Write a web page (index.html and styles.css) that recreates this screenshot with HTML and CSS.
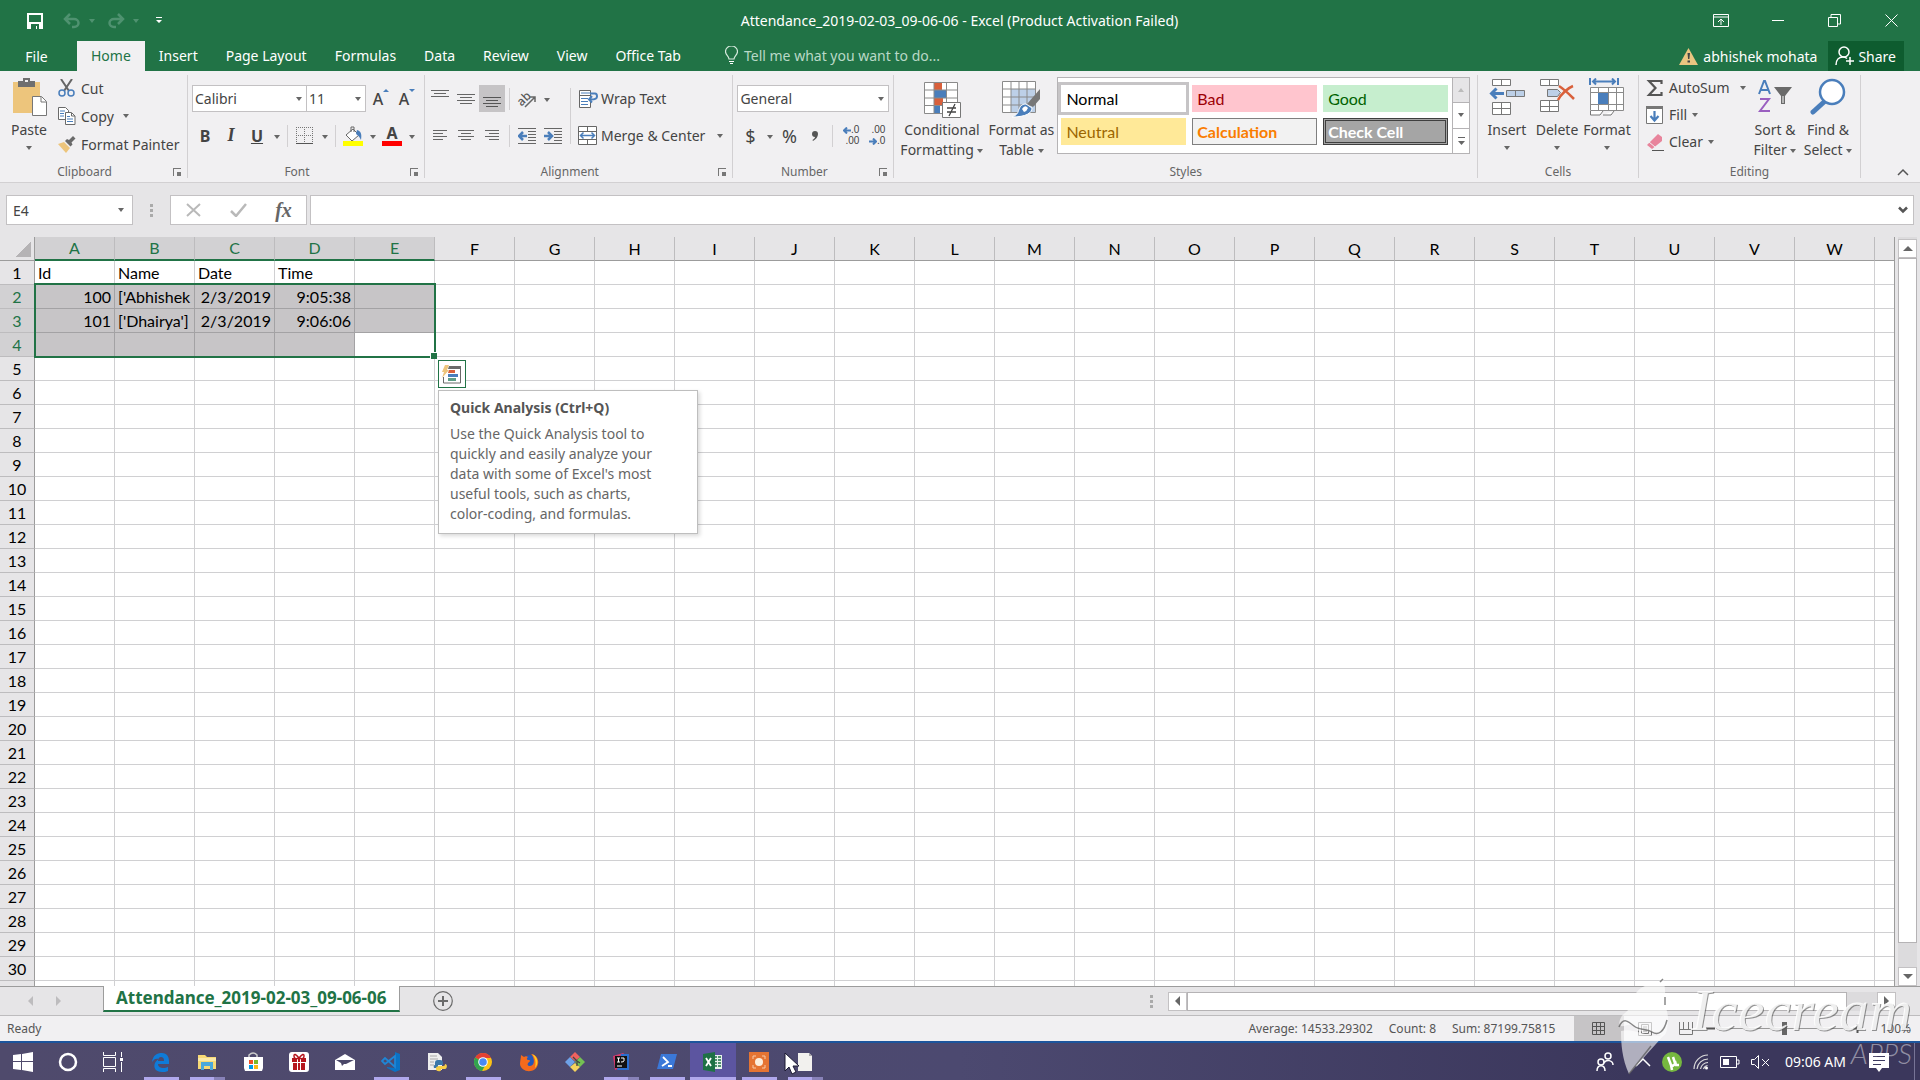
FILE: index.html
```html
<!DOCTYPE html>
<html lang="en">

<head>
    <meta charset="UTF-8">
    <meta name="viewport" content="width=device-width, initial-scale=1.0">
    <title>Attendance_2019-02-03_09-06-06 - Excel</title>
    <link rel="stylesheet" href="styles.css">
</head>

<body>
    <header class="top">
        <div class="titlebar">
            <div class="quick">
                <button class="save" aria-label="Save">
                    <svg width="16" height="16" viewBox="0 0 16 16"><path d="M1 1h14v14H1z" fill="none" stroke="#fff" stroke-width="2"/><path d="M1 9h14v6H1z" fill="#fff"/><path d="M4 11h8v5h-2v-3H9v3H4z" fill="#217346"/></svg>
                </button>
                <button class="dim" aria-label="Undo">
                    <svg width="18" height="16" viewBox="0 0 18 16"><path d="M2 6h9a4.500 4 0 0 1 0 8H9M7 1L2 6l5 5" fill="none" stroke="currentColor" stroke-width="2.500"/></svg>
                    <i class="caret"></i>
                </button>
                <button class="dim" aria-label="Redo">
                    <svg width="18" height="16" viewBox="0 0 18 16"><path d="M16 6H7a4.500 4 0 0 0 0 8h2M11 1l5 5-5 5" fill="none" stroke="currentColor" stroke-width="2.500"/></svg>
                    <i class="caret"></i>
                </button>
                <button class="more" aria-label="Customize">
                    <svg width="6" height="7" viewBox="0 0 6 7"><path d="M0 0h6v1H0zM0 3h6L3 6z" fill="#fff"/></svg>
                </button>
            </div>
            <h1>Attendance_2019-02-03_09-06-06 - Excel (Product Activation Failed)</h1>
            <div class="win-btns">
                <button aria-label="Ribbon options"><svg width="16" height="14" viewBox="0 0 16 14"><path d="M.5.5h15v12H.5zM.5 3h15M8 11V5M5 8l3-3 3 3" fill="none" stroke="#fff"/></svg></button>
                <button aria-label="Minimize"><svg width="12" height="12" viewBox="0 0 12 12"><path d="M0 5.500h12" stroke="#fff"/></svg></button>
                <button aria-label="Restore"><svg width="13" height="13" viewBox="0 0 13 13"><path d="M.5 3.500h9v9h-9zM3 3V.5h9.500V10H10" fill="none" stroke="#fff"/></svg></button>
                <button aria-label="Close"><svg width="13" height="13" viewBox="0 0 13 13"><path d="M.5.5l12 12M12.500.5l-12 12" stroke="#fff"/></svg></button>
            </div>
        </div>
        <nav class="tabs">
            <button class="file">File</button>
            <button class="active">Home</button>
            <button>Insert</button>
            <button>Page Layout</button>
            <button>Formulas</button>
            <button>Data</button>
            <button>Review</button>
            <button>View</button>
            <button>Office Tab</button>
            <button class="tell">
                <svg width="13" height="19" viewBox="0 0 13 19"><path d="M4 13c0-3-3.500-4-3.500-7.500a6 5.500 0 0 1 12 0C12.500 9 9 10 9 13zM4 15.500h5" fill="none" stroke="#d8ebdf" stroke-width="1.200"/><path d="M4 15h5v1H4zM5 17h3v1H5z" fill="#fff"/></svg>
                Tell me what you want to do...
            </button>
            <div class="account">
                <svg width="19" height="17" viewBox="0 0 19 17"><path d="M9.500 0L19 17H0z" fill="#ebc581"/><path d="M8.500 5h2.500l-.6 6H9.100zM8.500 12.500h2.500v2H8.500z" fill="#444"/></svg>
                <span>abhishek mohata</span>
            </div>
            <button class="share">
                <svg width="19" height="20" viewBox="0 0 19 20"><circle cx="9" cy="6" r="5" fill="none" stroke="#fff" stroke-width="1.500"/><path d="M1 19c0-5 3-8 7-8 2 0 3 .6 4 1.500M15 11v8M11 15h8" fill="none" stroke="#fff" stroke-width="1.500"/></svg>
                Share
            </button>
        </nav>
    </header>

    <section class="ribbon">
        <div class="group">
            <div class="group-body clipboard">
                <button class="big">
                    <svg width="36" height="40" viewBox="0 0 36 40"><path d="M2 4h27v31H2z" fill="#edc57c"/><path d="M7 3h5V0h7v3h5v6H7z" fill="#6f6f6f"/><path d="M14 2h3v2h-3z" fill="#eee"/><path d="M21.500 18.500h9l5 5v14h-14z" fill="#fff" stroke="#777"/><path d="M30 19v5h5" fill="none" stroke="#777"/></svg>
                    <span>Paste</span><i class="caret"></i>
                </button>
                <div class="small-col">
                    <button>
                        <svg width="18" height="18" viewBox="0 0 18 18"><path d="M3 0l8 12M14 0L6 12" stroke="#666" stroke-width="2"/><circle cx="4" cy="14" r="3" fill="none" stroke="#4a7ebb" stroke-width="1.500"/><circle cx="13" cy="14" r="3" fill="none" stroke="#4a7ebb" stroke-width="1.500"/></svg>
                        Cut
                    </button>
                    <button>
                        <svg width="18" height="18" viewBox="0 0 18 18"><path d="M.5.5h7l3 3v9H.5z" fill="#fff" stroke="#6a6a6a"/><path d="M2 4h5M2 6.500h4M2 9h4" stroke="#4a7ebb"/><path d="M7.500 5.500h6l3.500 3.500v8.500H7.500z" fill="#fff" stroke="#6a6a6a"/><path d="M13.500 6v3H17" fill="none" stroke="#6a6a6a"/><path d="M9 9.500h3M9 12h6M9 14.500h6" stroke="#4a7ebb"/></svg>
                        Copy <i class="caret"></i>
                    </button>
                    <button>
                        <svg width="18" height="18" viewBox="0 0 18 18"><path d="M0 9l6-2 6 6-4 5z" fill="#edc57c"/><path d="M7 6l2-2 2 1 4-4 2.500 2.500-4 4 1 2-2 2z" fill="#6a6a6a"/></svg>
                        Format Painter
                    </button>
                </div>
            </div>
            <div class="group-label"><span>Clipboard</span><button class="launch" aria-label="Clipboard options"></button></div>
        </div>

        <div class="group">
            <div class="group-body rows">
                <div class="row">
                    <label class="combo font-name"><select aria-label="Font"><option>Calibri</option></select></label>
                    <label class="combo font-size"><select aria-label="Font size"><option>11</option></select></label>
                    <button class="tool grow" aria-label="Increase font">A<svg width="6" height="4" viewBox="0 0 6 4"><path d="M0 3l3-3 3 3z" fill="#4a7ebb"/></svg></button>
                    <button class="tool grow" aria-label="Decrease font">A<svg width="6" height="4" viewBox="0 0 6 4"><path d="M0 0h6L3 3z" fill="#4a7ebb"/></svg></button>
                </div>
                <div class="row">
                    <button class="tool bold">B</button>
                    <button class="tool italic">I</button>
                    <button class="tool underline">U</button>
                    <button class="drop" aria-label="Underline styles"><i class="caret"></i></button>
                    <span class="sep"></span>
                    <button class="tool" aria-label="Borders"><svg width="18" height="18" viewBox="0 0 18 18"><path d="M.5 0v16M8.500 0v16M16.500 0v16M0 .5h17M0 8.500h17" stroke="#777" stroke-dasharray="1 1"/><path d="M0 16.500h17" stroke="#555"/></svg></button>
                    <button class="drop" aria-label="Border styles"><i class="caret"></i></button>
                    <span class="sep"></span>
                    <button class="tool" aria-label="Fill color"><svg width="20" height="20" viewBox="0 0 20 20"><path d="M3 9l7-6 6 6-7 6z" fill="#fff" stroke="#666"/><path d="M8 6V1h3v5" fill="none" stroke="#666"/><path d="M14 4c4 1 5 4 4 10-1-2-2-4-5-6z" fill="#4a7ebb"/><path d="M0 15h20v5H0z" fill="#ff0"/></svg></button>
                    <button class="drop" aria-label="Fill colors"><i class="caret"></i></button>
                    <button class="tool font-color" aria-label="Font color">A</button>
                    <button class="drop" aria-label="Font colors"><i class="caret"></i></button>
                </div>
            </div>
            <div class="group-label"><span>Font</span><button class="launch" aria-label="Font options"></button></div>
        </div>

        <div class="group">
            <div class="group-body align">
                <div class="rows">
                    <div class="row">
                        <button class="tool" aria-label="Top align"><svg width="18" height="18" viewBox="0 0 18 18"><path d="M0 .5h18M3 3.500h12M0 6.500h18" stroke="#666"/></svg></button>
                        <button class="tool" aria-label="Middle align"><svg width="18" height="18" viewBox="0 0 18 18"><path d="M0 4.500h18M3 7.500h12M0 10.500h18M3 13.500h12" stroke="#666"/></svg></button>
                        <button class="tool pressed" aria-label="Bottom align"><svg width="18" height="18" viewBox="0 0 18 18"><path d="M0 7.500h18M3 10.500h12M0 13.500h18M3 16.500h12" stroke="#555"/></svg></button>
                        <span class="sep"></span>
                        <button class="tool" aria-label="Orientation"><svg class="slant" width="20" height="20" viewBox="0 0 20 20"><text x="1" y="15" transform="rotate(-45 6 12)">ab</text><path d="M8 18L18 8M13 8h5v5" fill="none" stroke="#666" stroke-width="1.500"/></svg></button>
                        <button class="drop" aria-label="Orientation menu"><i class="caret"></i></button>
                    </div>
                    <div class="row">
                        <button class="tool" aria-label="Align left"><svg width="14" height="14" viewBox="0 0 14 14"><path d="M0 1.500h14M0 4.500h10M0 7.500h14M0 10.500h10" stroke="#666"/></svg></button>
                        <button class="tool" aria-label="Center"><svg width="16" height="14" viewBox="0 0 16 14"><path d="M0 1.500h16M3 4.500h10M0 7.500h16M3 10.500h10" stroke="#666"/></svg></button>
                        <button class="tool" aria-label="Align right"><svg width="14" height="14" viewBox="0 0 14 14"><path d="M0 1.500h14M4 4.500h10M0 7.500h14M4 10.500h10" stroke="#666"/></svg></button>
                        <span class="sep"></span>
                        <button class="tool" aria-label="Decrease indent"><svg width="18" height="18" viewBox="0 0 18 18"><path d="M0 1.500h18M10 4.500h8M10 7.500h8M10 10.500h8M10 13.500h8M0 16.500h18" stroke="#666"/><path d="M9 9H2M5 5L1 9l4 4" fill="none" stroke="#4a7ebb" stroke-width="2.500"/></svg></button>
                        <button class="tool" aria-label="Increase indent"><svg width="18" height="18" viewBox="0 0 18 18"><path d="M0 1.500h18M10 4.500h8M10 7.500h8M10 10.500h8M10 13.500h8M0 16.500h18" stroke="#666"/><path d="M0 9h7M4 5l4 4-4 4" fill="none" stroke="#4a7ebb" stroke-width="2.500"/></svg></button>
                    </div>
                </div>
                <span class="sep tall"></span>
                <div class="rows">
                    <button class="row text-btn">
                        <svg width="20" height="18" viewBox="0 0 20 18"><path d="M1.500.5h11v17h-11zM1.500 5.500h11" fill="#fff" stroke="#666"/><path d="M3 3h9M3 8.500h7M3 11.500h7M3 14.500h7" stroke="#4a7ebb"/><path d="M12 3.500h5q2 0 2 3t-6 3M14 6l-3 3.500 3 3" fill="none" stroke="#4a7ebb" stroke-width="2"/></svg>
                        Wrap Text
                    </button>
                    <button class="row text-btn">
                        <svg width="20" height="20" viewBox="0 0 20 20"><path d="M.5.500h18v18H.5zM.5 5.500h18M.5 13.500h18M9.500.5v5M9.500 13.500v5" fill="#fff" stroke="#666"/><path d="M2.500 9.500h14M5.500 6.500l-3 3 3 3M13.500 6.500l3 3-3 3" fill="none" stroke="#4a7ebb" stroke-width="1.500"/></svg>
                        Merge &amp; Center <i class="caret"></i>
                    </button>
                </div>
            </div>
            <div class="group-label"><span>Alignment</span><button class="launch" aria-label="Alignment options"></button></div>
        </div>

        <div class="group">
            <div class="group-body rows">
                <div class="row">
                    <label class="combo number-format"><select aria-label="Number format"><option>General</option></select></label>
                </div>
                <div class="row">
                    <button class="tool sign">$</button>
                    <button class="drop" aria-label="Currency menu"><i class="caret"></i></button>
                    <button class="tool sign">%</button>
                    <button class="tool" aria-label="Comma style"><svg width="8" height="10" viewBox="0 0 8 10"><path d="M4 0a3 3 0 0 1 3 3c0 3-2 5-5 7l-.5-1C3 8 4 7 4 6a3 3 0 0 1 0-6z" fill="#555"/></svg></button>
                    <span class="sep"></span>
                    <button class="tool decimals"><span><svg width="8" height="7" viewBox="0 0 8 7"><path d="M8 3.500H2M4 .5l-3 3 3 3" fill="none" stroke="#4a7ebb" stroke-width="2"/></svg>.0</span><span>.00</span></button>
                    <button class="tool decimals"><span>.00</span><span><svg width="8" height="7" viewBox="0 0 8 7"><path d="M0 3.500h6M4 .5l3 3-3 3" fill="none" stroke="#4a7ebb" stroke-width="2"/></svg>.0</span></button>
                </div>
            </div>
            <div class="group-label"><span>Number</span><button class="launch" aria-label="Number options"></button></div>
        </div>

        <div class="group styles">
            <div class="group-body">
                <button class="big cond">
                    <svg width="38" height="40" viewBox="0 0 38 40"><path d="M1.500 4.500h33v31h-33z" fill="#fff"/><path d="M11 5h8v7h-8zM11 20h9v7h-9z" fill="#d9603b"/><path d="M11 12h12v8H11zM11 27h6v8h-6z" fill="#4a7ebb"/><path d="M1.500 4.500h33v31h-33zM11 4v31M23.500 4v31M1 12h33M1 20h33M1 27.500h33" fill="none" stroke="#8a8a8a"/><path d="M19.500 24.500h18v15h-18z" fill="#fff" stroke="#777"/><path d="M24 30h9M24 34h9M32 26l-6 12" stroke="#444" stroke-width="1.300"/></svg>
                    <span>Conditional<br>Formatting <i class="caret"></i></span>
                </button>
                <button class="big table">
                    <svg width="38" height="40" viewBox="0 0 38 40"><path d="M.5 3.500h33v31H.5z" fill="#fff"/><path d="M9 11h24v23H9z" fill="#bdd0e8"/><path d="M.5 3.500h33v31H.5zM9 3v31M17 3v31M25 3v31M0 11h33M0 19h33M0 27h33" fill="none" stroke="#8a8a8a"/><path d="M38 11v10l-7 8-6-3z" fill="#777"/><path d="M24 26l6 4c0 5-6 9-20 9 5-2 6-4 7-8 2-4 4-5 7-5z" fill="#4a7ebb" stroke="#fff"/><path d="M20 31q3-5 6-1-1 3-4 4z" fill="#fff"/></svg>
                    <span>Format as<br>Table <i class="caret"></i></span>
                </button>
                <div class="gallery">
                    <div class="tiles">
                        <button class="normal">Normal</button>
                        <button class="bad">Bad</button>
                        <button class="good">Good</button>
                        <button class="neutral">Neutral</button>
                        <button class="calc">Calculation</button>
                        <button class="check">Check Cell</button>
                    </div>
                    <div class="gallery-nav">
                        <button class="off" aria-label="Previous styles"><i class="caret up"></i></button>
                        <button aria-label="Next styles"><i class="caret"></i></button>
                        <button aria-label="All styles"><svg width="7" height="8" viewBox="0 0 7 8"><path d="M0 0h7v1H0zM0 4h7L3.500 8z" fill="#666"/></svg></button>
                    </div>
                </div>
            </div>
            <div class="group-label"><span>Styles</span></div>
        </div>

        <div class="group cells">
            <div class="group-body">
                <button class="big">
                    <svg width="36" height="40" viewBox="0 0 36 40"><path d="M3.500 1.500h18v6h-18zM12.500 1.500v6M3.500 24.500h18v12h-18zM12.500 24.500v12M3.500 30.500h18" fill="#fff" stroke="#777"/><path d="M17.500 12.500h18v6h-18zM26.500 12.500v6" fill="#bdd0e8" stroke="#777"/><path d="M15 15.500H3M7.500 10.500l-5 5 5 5" fill="none" stroke="#4a7ebb" stroke-width="3"/></svg>
                    <span>Insert</span><i class="caret"></i>
                </button>
                <button class="big">
                    <svg width="36" height="40" viewBox="0 0 36 40"><path d="M1.500 1.500h18v6h-18zM10.500 1.500v6M1.500 22.500h18v11h-18zM10.500 22.500v11M1.500 28.500h18" fill="#fff" stroke="#777"/><path d="M8.500 11.500h10l3 3-3 4h-10z" fill="#bdd0e8" stroke="#777"/><path d="M20 8c5 3 10 8 15 13M34 8c-5 2-12 8-15 14" fill="none" stroke="#d9603b" stroke-width="2.500"/></svg>
                    <span>Delete</span><i class="caret"></i>
                </button>
                <button class="big">
                    <svg width="36" height="40" viewBox="0 0 36 40"><path d="M1.500 9.500h33v23h-33z" fill="#fff"/><path d="M1.500 9.500h33v23h-33zM9.500 9v23M19.500 9v23M27.500 9v23M1 14.500h33M1 26.500h33" fill="none" stroke="#8a8a8a"/><path d="M9 15h10v11H9z" fill="#4a7ebb"/><path d="M1.500 33v4H11l3-4M14 37h8l3-4" fill="#fff" stroke="#777"/><path d="M1 0v7M29 0v7M4 3.500h22M7 .5l-3 3 3 3M23 .5l3 3-3 3" fill="none" stroke="#4a7ebb" stroke-width="2"/></svg>
                    <span>Format</span><i class="caret"></i>
                </button>
            </div>
            <div class="group-label"><span>Cells</span></div>
        </div>

        <div class="group">
            <div class="group-body editing">
                <div class="small-col">
                    <button>
                        <svg width="18" height="18" viewBox="0 0 18 18"><path d="M15.500 5V2H3l6.500 7L3 16h12.500v-3" fill="none" stroke="#555" stroke-width="2.200"/></svg>
                        AutoSum <i class="caret far"></i>
                    </button>
                    <button>
                        <svg width="18" height="18" viewBox="0 0 18 18"><path d="M.5.5h16v17H.5z" fill="#fff" stroke="#777"/><path d="M0 0h17v3H0z" fill="#777"/><path d="M8.500 5v9M4.500 10l4 4.500 4-4.500" fill="none" stroke="#4a7ebb" stroke-width="2.200"/></svg>
                        Fill <i class="caret"></i>
                    </button>
                    <button>
                        <svg width="18" height="18" viewBox="0 0 18 18"><path d="M1 12L12 1l4 3v4L6 16z" fill="#e8849c"/><path d="M3 9l6 5" stroke="#f1f0f2" stroke-width="1"/><path d="M6 17.500h12" stroke="#555"/></svg>
                        Clear <i class="caret"></i>
                    </button>
                </div>
                <button class="big">
                    <svg width="36" height="40" viewBox="0 0 36 40"><path d="M2 16L7 3h1l5 13M4 12h7" fill="none" stroke="#4a7ebb" stroke-width="2"/><path d="M3 21h9L3 33h10" fill="none" stroke="#9a5fc0" stroke-width="2"/><path d="M17 9h18l-7 9v8h-4v-8z" fill="#6a6a6a"/><path d="M25.500 18h1v7h-1z" fill="#fff"/></svg>
                    <span>Sort &amp;<br>Filter <i class="caret"></i></span>
                </button>
                <button class="big find">
                    <svg width="36" height="40" viewBox="0 0 36 40"><path d="M14 24L3 34" stroke="#4a7ebb" stroke-width="5" stroke-linecap="round"/><circle cx="22" cy="14" r="12" fill="#fff" stroke="#4a7ebb" stroke-width="2.500"/></svg>
                    <span>Find &amp;<br>Select <i class="caret"></i></span>
                </button>
            </div>
            <div class="group-label"><span>Editing</span></div>
        </div>
        <button class="collapse" aria-label="Collapse ribbon"><svg width="12" height="8" viewBox="0 0 12 8"><path d="M1 7l5-5 5 5" fill="none" stroke="#555" stroke-width="1.500"/></svg></button>
    </section>

    <section class="formula-bar">
        <label class="combo name-box"><select aria-label="Name box"><option>E4</option></select></label>
        <span class="dots"></span>
        <div class="fx-btns">
            <button aria-label="Cancel"><svg width="16" height="14" viewBox="0 0 16 14"><path d="M1 1l13 12M14 1L1 13" stroke="#b9b9b9" stroke-width="2"/></svg></button>
            <button aria-label="Enter"><svg width="17" height="14" viewBox="0 0 17 14"><path d="M1 8l5 5L16 1" fill="none" stroke="#b9b9b9" stroke-width="2.500"/></svg></button>
            <button class="fx">fx</button>
        </div>
        <div class="formula">
            <input type="text" aria-label="Formula">
            <button aria-label="Expand formula bar"><svg width="10" height="8" viewBox="0 0 10 8"><path d="M1 1.500l4 4 4-4" fill="none" stroke="#555" stroke-width="2.500"/></svg></button>
        </div>
    </section>

    <main class="sheet">
        <div class="grid">
            <table>
                <thead></thead>
                <tbody></tbody>
            </table>
            <div class="selection"></div>
            <button class="quick-analysis" aria-label="Quick Analysis">
                <svg width="20" height="19" viewBox="0 0 20 19"><path d="M1.500 12v6h17V2" fill="#fff" stroke="#6a6a6a"/><path d="M7 1h12v3H6z" fill="#6a6a6a"/><path d="M7 5h6v3H6z" fill="#d9603b"/><path d="M6 9h10v3H6z" fill="#4a7ebb"/><path d="M6 13h8v3H6z" fill="#5f9e86"/><path d="M3 0h4L5 5h2l-7 8 2-6H0z" fill="#edc57c"/></svg>
            </button>
            <div class="tooltip">
                <h2>Quick Analysis (Ctrl+Q)</h2>
                <p>Use the Quick Analysis tool to<br>quickly and easily analyze your<br>data with some of Excel's most<br>useful tools, such as charts,<br>color-coding, and formulas.</p>
            </div>
        </div>
        <div class="vscroll">
            <button aria-label="Scroll up"><i class="caret up"></i></button>
            <div class="thumb"></div>
            <button aria-label="Scroll down"><i class="caret"></i></button>
        </div>
    </main>

    <section class="sheet-tabs">
        <div class="sheet-nav">
            <button aria-label="Previous sheet"><i class="side left"></i></button>
            <button aria-label="Next sheet"><i class="side right"></i></button>
        </div>
        <button class="sheet-tab">Attendance_2019-02-03_09-06-06</button>
        <button class="add" aria-label="New sheet"><svg width="20" height="20" viewBox="0 0 20 20"><circle cx="10" cy="10" r="9.300" fill="none" stroke="#6a6a6a" stroke-width="1.200"/><path d="M10 5v10M5 10h10" stroke="#6a6a6a" stroke-width="2"/></svg></button>
        <span class="dots"></span>
        <div class="hscroll">
            <button aria-label="Scroll left"><i class="side left"></i></button>
            <div class="thumb"></div>
            <button aria-label="Scroll right"><i class="side right"></i></button>
        </div>
    </section>

    <footer class="status">
        <span class="ready">Ready</span>
        <span>Average: 14533.29302</span>
        <span>Count: 8</span>
        <span>Sum: 87199.75815</span>
        <div class="views">
            <button class="on" aria-label="Normal view"><svg width="14" height="14" viewBox="0 0 14 14"><path d="M.5.5h12v12H.5zM4.500 0v13M8.500 0v13M0 4.500h13M0 8.500h13" fill="none" stroke="#555"/></svg></button>
            <button aria-label="Page layout view"><svg width="14" height="14" viewBox="0 0 14 14"><path d="M.5.5h13v13H.5zM3.500 2.500h7v9h-7zM5 5h4M5 7h4M5 9h4" fill="none" stroke="#777"/></svg></button>
            <button aria-label="Page break view"><svg width="14" height="14" viewBox="0 0 14 14"><path d="M.5 0v12.500h13V0M4.500 0v7.500h5V0M.5 7.500h13" fill="none" stroke="#777"/></svg></button>
        </div>
        <div class="zoom">
            <button aria-label="Zoom out"><svg width="9" height="9" viewBox="0 0 9 9"><path d="M0 4.500h9" stroke="#555" stroke-width="2"/></svg></button>
            <input type="range" min="0" max="200" value="100" aria-label="Zoom">
            <button aria-label="Zoom in"><svg width="9" height="9" viewBox="0 0 9 9"><path d="M0 4.500h9M4.500 0v9" stroke="#555" stroke-width="2"/></svg></button>
            <span>100%</span>
        </div>
    </footer>

    <section class="taskbar">
        <div class="system">
            <button aria-label="Start"><svg width="20" height="20" viewBox="0 0 20 20"><path d="M0 3l8-1v7H0zM9 2l11-2v9H9zM0 10h8v8l-8-1zM9 10h11v10L9 18z" fill="#fff"/></svg></button>
            <button aria-label="Search"><svg width="20" height="20" viewBox="0 0 20 20"><circle cx="10" cy="10" r="8" fill="none" stroke="#fff" stroke-width="2.500"/></svg></button>
            <button aria-label="Task view"><svg width="20" height="20" viewBox="0 0 20 20"><path d="M.5 0v3.500h12V0M.5 5.500h12v9H.5zM.5 20v-3.500h12V20M18.500 0v5M18.500 10v10" fill="none" stroke="#fff"/><path d="M17 6h3v3h-3z" fill="#fff"/></svg></button>
        </div>
        <div class="apps">
            <button class="run" aria-label="Edge"><svg width="20" height="20" viewBox="0 0 20 20"><path d="M1 10C2 3 6 1 11 1c5 0 7 4 7 8v3H7c0 3 3 4 5 4 2 0 4-.6 5-1v4c-2 1-4 1-6 1-6 0-9-4-7-9 1-2 2-3 4-4C5 6 3 7 1 10zm6-1h6c0-3-1-4-3-4S7 7 7 9z" fill="#0f7bd8"/></svg></button>
            <button class="run more" aria-label="File Explorer"><svg width="20" height="20" viewBox="0 0 20 20"><path d="M1 3h7l2 2h9v12H1z" fill="#f7d975"/><path d="M1 6h18v3H1z" fill="#fbe9a6"/><path d="M4 10h12v8h-3v-4H7v4H4z" fill="#4aa8dc"/></svg></button>
            <button aria-label="Store"><svg width="20" height="20" viewBox="0 0 20 20"><path d="M6 5V3q4-4 8 0v2" fill="none" stroke="#ccc" stroke-width="1.500"/><path d="M1 5h19v11l-1 3H2l-1-3z" fill="#fff"/><path d="M6 8h4v4H6z" fill="#f05125"/><path d="M11 8h4v4h-4z" fill="#7db928"/><path d="M6 13h4v4H6z" fill="#0099e5"/><path d="M11 13h4v4h-4z" fill="#fdb813"/></svg></button>
            <button aria-label="Rewards"><svg width="20" height="20" viewBox="0 0 20 20"><rect width="20" height="20" rx="3" fill="#fff"/><path d="M3 6h14v4H3zM4 11h12v7H4z" fill="#b5161e"/><path d="M8.500 6v12M11.500 6v12" stroke="#fff"/><path d="M10 6Q5 0 5 4t5 2q5 2 5-2t-5 2" fill="none" stroke="#b5161e" stroke-width="1.500"/></svg></button>
            <button aria-label="Mail"><svg width="20" height="18" viewBox="0 0 20 18"><path d="M0 7l10-6 10 6v10H0z" fill="#fff"/><path d="M1 7h18l-8 4H9l-2 2-1-3z" fill="#4a4768"/></svg></button>
            <button class="run" aria-label="VS Code"><svg width="20" height="20" viewBox="0 0 20 20"><path d="M14 0l5 2v16l-5 2-8-4v-1l8 1V3z" fill="#0b72c4"/><path d="M14 4L4 12 1 9l3-3 10 9z" fill="none" stroke="#1f86d6" stroke-width="1.800"/></svg></button>
            <button aria-label="Python"><svg width="20" height="20" viewBox="0 0 20 20"><path d="M1 1h10l4 4v13H1z" fill="#eee"/><path d="M3 4h7M3 7h8M3 10h4M3 13h4" stroke="#aaa"/><path d="M8 13c0-4 0-5 4-5s4 1 4 5h-5v3H7q-1-3 1-3z" fill="#3b77a8"/><path d="M18 12c3 0 2 5 0 5h-4c1 3-5 3-5 0 0-3 2-3 5-3 3 0 4 0 4-2z" fill="#f7cf46"/></svg></button>
            <button class="run" aria-label="Chrome"><svg width="20" height="20" viewBox="0 0 20 20"><circle cx="10" cy="10" r="9" fill="#fbc116"/><path d="M10 10L2.200 5.500A9 9 0 0 1 18 6H10z" fill="#e24033"/><path d="M2.200 5.500A9 9 0 0 0 9 19l4-7-3-2z" fill="#31a350"/><circle cx="10" cy="10" r="4.800" fill="#fff"/><circle cx="10" cy="10" r="3.800" fill="#4889f4"/></svg></button>
            <button aria-label="Firefox"><svg width="20" height="20" viewBox="0 0 20 20"><circle cx="11" cy="10" r="7" fill="#2458b8"/><path d="M2 3l3 2c1-1 3-1 4 0-1 1-2 2 0 3 2 0 3 1 1 2-2 2-2 4 1 4 5 0 5-8 1-12 6 1 8 6 7 10-2 10-17 9-18 0 0-3 1-6 1-9z" fill="#f46a1c"/><path d="M13 2c6 2 7 10 3 14 1-5 1-9-3-14z" fill="#fecb22"/></svg></button>
            <button aria-label="Git"><svg width="20" height="20" viewBox="0 0 20 20"><path d="M10 0l5 5-5 4-5-4z" fill="#f0625e"/><path d="M5 5l5 5-5 5-5-5z" fill="#6ea2e8"/><path d="M15 5l5 5-5 5-5-5z" fill="#74c153"/><path d="M10 11l5 4-5 5-5-5z" fill="#f4d35c"/><path d="M8 5l4 4v5M12 9l3 2" fill="none" stroke="#444" stroke-width="1.300"/></svg></button>
            <button class="run more" aria-label="IntelliJ IDEA"><svg width="20" height="20" viewBox="0 0 20 20"><path d="M2 4l10-3 4 3v10L4 18z" fill="#d8386c"/><path d="M10 2h8v16H6z" fill="#2a6fd0"/><path d="M4 4h12v12H4z" fill="#111"/><path d="M6 6h3M7.500 6v4M6 10h3M10 6h3v3q0 1-3 1M6 14h5" fill="none" stroke="#fff"/></svg></button>
            <button class="run" aria-label="PowerShell"><svg width="20" height="20" viewBox="0 0 20 20"><path d="M4 2h16l-4 15H0z" fill="#3b78d8"/><path d="M6 5l5 5-6 4M11 14h4" fill="none" stroke="#fff" stroke-width="1.800"/></svg></button>
            <button class="run current" aria-label="Excel"><svg width="20" height="20" viewBox="0 0 20 20"><path d="M9 3h10v14H9z" fill="#e9f2ec"/><path d="M11 5h3M15 5h3M11 8h3M15 8h3M11 11h3M15 11h3M11 14h3M15 14h3" stroke="#1e7145" stroke-width="1.500"/><path d="M0 2l12-2v20L0 18z" fill="#1e7145"/><path d="M3 6l5 8M8 6l-5 8" stroke="#fff" stroke-width="1.800"/></svg></button>
            <button class="run" aria-label="Screen Recorder"><svg width="20" height="20" viewBox="0 0 20 20"><path d="M0 0h20v20H0z" fill="#e57432"/><circle cx="10" cy="10" r="4" fill="#fbeedd"/><path d="M4 7V4h3M13 4h3v3M16 13v3h-3M7 16H4v-3" fill="none" stroke="#f9c9a4"/></svg></button>
            <button class="run more" aria-label="Document"><svg width="20" height="20" viewBox="0 0 20 20"><path d="M3 1h11l3 3v15H3z" fill="#f2f1ee"/><path d="M14 1v3h3z" fill="#aaa"/></svg></button>
        </div>
        <div class="tray">
            <button class="people" aria-label="People"><svg width="18" height="20" viewBox="0 0 18 20"><circle cx="12" cy="4" r="3" fill="none" stroke="#fff" stroke-width="1.500"/><circle cx="5" cy="10" r="3" fill="none" stroke="#fff" stroke-width="1.500"/><path d="M1 19c0-7 8-7 8 0M8 11c2-4 9-3 9 2" fill="none" stroke="#fff" stroke-width="1.500"/></svg></button>
            <button aria-label="Show hidden icons"><svg width="16" height="10" viewBox="0 0 16 10"><path d="M1 9l7-7 7 7" fill="none" stroke="#fff" stroke-width="1.500"/></svg></button>
            <button aria-label="uTorrent"><svg width="20" height="20" viewBox="0 0 20 20"><circle cx="10" cy="10" r="10" fill="#76b83f"/><path d="M6 5l3 8c1 1 4 1 4-2l-2-6M13 9l1 4h3M9 13l1 5" fill="none" stroke="#fff" stroke-width="2.500"/></svg></button>
            <button aria-label="Wi-Fi"><svg width="16" height="16" viewBox="0 0 16 16"><path d="M1 15A14 14 0 0 1 15 1M4 15A11 11 0 0 1 15 5M7.500 15A8 8 0 0 1 15 8.500M10.500 15a5 5 0 0 1 4-3.500" fill="none" stroke="#ddd" stroke-width="1.200"/><circle cx="13.500" cy="14" r="1.500" fill="#fff"/></svg></button>
            <button aria-label="Battery"><svg width="20" height="12" viewBox="0 0 20 12"><path d="M.5.5h16v11H.5zM17 4h2v4h-2" fill="none" stroke="#fff"/><path d="M3 3h6v6H3z" fill="#fff"/></svg></button>
            <button aria-label="Volume"><svg width="19" height="14" viewBox="0 0 19 14"><path d="M.5 4.500h3l4-4v13l-4-4h-3zM11 4l7 7M18 4l-7 7" fill="none" stroke="#fff"/></svg></button>
            <time>09:06 AM</time>
            <button class="notice" aria-label="Notifications"><svg width="20" height="20" viewBox="0 0 20 20"><path d="M0 1h20v15h-7l-3 4-3-4H0z" fill="#fff"/><path d="M4 4.500h12M4 8.500h12M4 12.500h8" stroke="#3d3a5f"/></svg></button>
        </div>
        <span class="desktop"></span>
    </section>

    <svg class="pointer" width="16" height="24" viewBox="0 0 16 24"><path d="M1 1v18l4-4 3 7 4-2-3-6h6z" fill="#fff" stroke="#1c1a33"/></svg>
    <div class="watermark">
        <svg width="54" height="98" viewBox="0 0 54 98"><path d="M2 48C3 36 9 38 15 28 17 14 24 10 31 8 36 4 42 6 46 2c3 10 2 16 2 26 3 8 4 14 2 24-2 12-8 5-12 4C30 52 22 58 18 50 12 44 6 52 2 48z" fill="#fff" opacity=".6"/><path d="M4 54c14-4 26 8 43 4L12 97C5 82 4 66 4 54z" fill="#fff" opacity=".6"/><path d="M2 50c4-10 9-6 15-1s12 2 18 6 12 0 15-12M46 2l-3 3M48 20v8M12 97l22-28" fill="none" stroke="#555" stroke-width="1.500" opacity=".7"/></svg>
        <div class="brand"><span>Icecream</span><small>APPS</small></div>
    </div>
    <script src="script.js"></script>
</body>

</html>
```

FILE: styles.css
```css
* {
    box-sizing: border-box;
}

body {
    margin: 0;
    height: 100vh;
    display: flex;
    flex-direction: column;
    overflow: hidden;
    background: #e6e5e7;
    color: #444;
    font-family: "Noto Sans", "Open Sans", sans-serif;
    font-size: 14px;
}

button {
    appearance: none;
    border: none;
    background: none;
    padding: 0;
    margin: 0;
    font: inherit;
    color: inherit;
    cursor: pointer;
    white-space: nowrap;
}

svg {
    display: block;
    flex: none;
}

/* small triangles */
.caret {
    display: inline-block;
    flex: none;
    width: 0;
    height: 0;
    border: 3px solid transparent;
    border-top: 4px solid #666;
    border-bottom: 0;
    vertical-align: middle;
}

.caret.up {
    border-top: 0;
    border-bottom: 4px solid #666;
}

.side {
    width: 0;
    height: 0;
    border: 5px solid transparent;
}

.side.left {
    border-right-color: #666;
    border-left: 0;
}

.side.right {
    border-left-color: #666;
    border-right: 0;
}

.dots {
    width: 3px;
    height: 13px;
    background: repeating-linear-gradient(#aaa 0 3px, transparent 3px 5px);
}

/* title bar */
.top {
    background: #217346;
    color: #fff;
}

.titlebar {
    display: flex;
    align-items: center;
    height: 41px;
}

.quick,
.win-btns {
    flex: 1;
    display: flex;
    align-items: center;
}

.quick {
    padding-left: 27px;
}

.quick button {
    display: flex;
    align-items: center;
    gap: 8px;
}

.quick .save {
    margin-right: 20px;
}

.quick .dim {
    color: #4f9270;
    margin-right: 12px;
}

.quick .dim .caret {
    border-top-color: #4f9270;
}

.quick .more {
    margin-left: 5px;
}

.titlebar h1 {
    margin: 0;
    font-size: 14px;
    font-weight: normal;
}

.win-btns {
    justify-content: flex-end;
    margin-left: 28px;
}

.win-btns button {
    width: 57px;
    height: 38px;
    display: flex;
    align-items: center;
    justify-content: center;
}

.tabs {
    display: flex;
    align-items: center;
    height: 30px;
    padding-right: 16px;
}

.tabs button {
    height: 30px;
    padding: 0 14px 2px;
}

.tabs .file {
    width: 77px;
    padding: 0 18px 0 14px;
}

.tabs .active {
    background: #f1f0f2;
    color: #217346;
}

.tabs .tell {
    display: flex;
    align-items: center;
    gap: 6px;
    margin-left: 16px;
    color: #b9d9c7;
}

.account {
    display: flex;
    align-items: center;
    gap: 5px;
    margin-left: auto;
    margin-right: 11px;
}

.tabs .share {
    display: flex;
    align-items: center;
    gap: 4px;
    padding: 0 8px 0 7px;
    background: #0e5c2f;
}

/* ribbon */
.ribbon {
    display: flex;
    height: 112px;
    padding: 4px 0;
    background: #f1f0f2;
    border-bottom: 1px solid #d2d0d2;
}

.group {
    display: flex;
    flex-direction: column;
    border-right: 1px solid #d2d0d2;
}

.group-body {
    display: flex;
    height: 90px;
    padding: 0 4px;
}

.group-label {
    display: flex;
    align-items: center;
    height: 13px;
    line-height: 15px;
    font-size: 12px;
    color: #666;
}

.group-label span {
    flex: 1;
    text-align: center;
}

.launch {
    width: 8px;
    height: 8px;
    margin: 0 6px 0 4px;
    border-top: 1px solid #777;
    border-left: 1px solid #777;
    background: linear-gradient(#777, #777) right bottom / 4px 4px no-repeat;
}

.big {
    width: 50px;
    display: flex;
    flex-direction: column;
    align-items: center;
    line-height: 20px;
    padding-top: 3px;
}

.big > svg {
    margin-bottom: 2px;
}

.big > .caret {
    margin-top: 6px;
}

.big.cond {
    width: 87px;
}

.big.table {
    width: 72px;
}

.big.find {
    width: 56px;
}

.small-col {
    display: flex;
    flex-direction: column;
}

.small-col button {
    display: flex;
    align-items: center;
    gap: 5px;
    height: 28px;
    padding-bottom: 2px;
}

.clipboard .small-col {
    width: 129px;
    padding-left: 4px;
}

.clipboard .small-col .caret {
    margin-left: 4px;
}

.editing .small-col {
    width: 107px;
    padding-left: 3px;
}

.editing .small-col button {
    height: 27px;
}

.editing .small-col .far {
    margin-left: 5px;
}

.cells .group-body {
    padding-right: 6px;
}

.rows {
    display: flex;
    flex-direction: column;
    gap: 10px;
    padding-top: 10px;
}

.row {
    display: flex;
    align-items: center;
    height: 27px;
}

.combo {
    position: relative;
    display: block;
    height: 27px;
}

.combo select {
    appearance: none;
    width: 100%;
    height: 100%;
    padding: 0 2px;
    border: 1px solid #c3c1c3;
    border-radius: 0;
    background: #fff;
    color: #444;
    font: inherit;
}

.combo::after {
    content: "";
    position: absolute;
    right: 5px;
    top: 50%;
    margin-top: -2px;
    border: 3px solid transparent;
    border-top: 4px solid #666;
    border-bottom: 0;
}

.font-name {
    width: 115px;
}

.font-size {
    width: 60px;
    margin: 0 2px 0 -1px;
}

.number-format {
    width: 152px;
}

.tool {
    width: 26px;
    height: 27px;
    display: flex;
    align-items: center;
    justify-content: center;
}

.tool.pressed {
    background: #c6c4c6;
}

.grow {
    font-size: 16px;
    font-weight: 500;
}

.grow svg {
    align-self: flex-start;
    margin-top: 4px;
}

.slant {
    overflow: visible;
}

.slant text {
    font-size: 12px;
    font-weight: 500;
    fill: #555;
}

.bold,
.italic,
.underline {
    font-size: 16px;
    font-weight: bold;
}

.italic {
    font-family: "Liberation Serif", serif;
    font-size: 18px;
    font-style: italic;
}

.underline {
    text-decoration: underline;
}

.font-color {
    width: 20px;
    height: 20px;
    margin: 0 3px;
    border-bottom: 5px solid #f00;
    font-size: 16px;
    font-weight: bold;
    line-height: 14px;
}

.sign {
    font-size: 18px;
}

.decimals {
    flex-direction: column;
    align-items: flex-end;
    padding-right: 4px;
    font-family: "Liberation Sans", sans-serif;
    font-size: 10px;
    line-height: 10px;
}

.decimals span {
    display: flex;
    align-items: center;
    height: 11px;
}

.drop {
    width: 13px;
    height: 27px;
}

.sep {
    width: 1px;
    height: 22px;
    margin: 0 4px;
    background: #d2d0d2;
}

.sep.tall {
    height: 56px;
    margin-top: 13px;
}

.text-btn {
    gap: 3px;
    padding-left: 3px;
}

.text-btn .caret {
    margin: 0 5px 0 9px;
}

.group-body.align {
    padding: 0 4px 0 2px;
}

.styles {
    flex: 1;
}

.styles .group-body {
    padding-right: 7px;
}

.gallery {
    flex: 1;
    display: flex;
    height: 77px;
    margin-top: 2px;
    border: 1px solid #b5b3b5;
    background: #fff;
}

.tiles {
    flex: 1;
    display: grid;
    grid-template-columns: repeat(3, 1fr);
    grid-template-rows: 27px 27px;
    gap: 6px;
    padding: 7px 4px 0 3px;
}

.tiles button {
    padding: 0 5px;
    text-align: left;
    font-family: Lato, sans-serif;
    font-size: 16px;
}

.tiles .normal {
    outline: 3px solid #c6c4c6;
    color: #000;
}

.tiles .bad {
    background: #ffc5ce;
    color: #9c0006;
}

.tiles .good {
    background: #c6eece;
    color: #006100;
}

.tiles .neutral {
    background: #ffe998;
    color: #9c6500;
}

.tiles .calc {
    border: 1px solid #7f7f7f;
    padding: 0 4px;
    background: #f2f2f2;
    color: #fa7d00;
    font-weight: bold;
}

.tiles .check {
    border: 3px double #3f3f3f;
    padding: 0 2px;
    background: #a5a5a5;
    color: #fff;
    font-weight: bold;
}

.gallery-nav {
    width: 17px;
    display: flex;
    flex-direction: column;
    border-left: 1px solid #b5b3b5;
}

.gallery-nav button {
    flex: 1;
    display: flex;
    align-items: center;
    justify-content: center;
    border-bottom: 1px solid #b5b3b5;
}

.gallery-nav button:last-child {
    border-bottom: 0;
}

.gallery-nav .off {
    background: #e6e5e7;
}

.gallery-nav .off .caret {
    border-bottom-color: #bbb;
}

.collapse {
    width: 59px;
    display: flex;
    align-items: flex-end;
    justify-content: flex-end;
    padding: 0 11px 2px 0;
}

/* formula bar */
.formula-bar {
    display: flex;
    align-items: center;
    padding: 12px 6px;
}

.name-box {
    width: 127px;
    height: 30px;
}

.name-box select {
    padding-left: 6px;
}

.name-box::after {
    right: 9px;
}

.formula-bar .dots {
    margin: 0 17px;
}

.fx-btns,
.formula {
    display: flex;
    height: 30px;
    background: #fff;
    border: 1px solid #c3c1c3;
}

.fx-btns {
    width: 137px;
    margin-right: 3px;
}

.fx-btns button {
    flex: 1;
    display: flex;
    align-items: center;
    justify-content: center;
}

.fx-btns .fx {
    font-family: "Liberation Serif", serif;
    font-style: italic;
    font-size: 20px;
    font-weight: bold;
    color: #666;
}

.formula {
    flex: 1;
}

.formula input {
    flex: 1;
    border: none;
    outline: none;
    background: none;
    font: inherit;
}

.formula button {
    width: 20px;
    display: flex;
    align-items: center;
    justify-content: center;
}

/* sheet */
.sheet {
    flex: 1;
    min-height: 0;
    display: flex;
    gap: 3px;
    padding-right: 3px;
}

.grid {
    position: relative;
    flex: 1;
    overflow: hidden;
    background: #fff;
    border-right: 1px solid #9c9c9c;
}

.grid table {
    table-layout: fixed;
    width: 100%;
    border-spacing: 0;
    font-family: Lato, "Noto Sans", sans-serif;
    font-size: 16px;
    color: #000;
}

.grid th,
.grid td {
    width: 80px;
    height: 24px;
    padding: 0 3px;
    line-height: 22px;
    font-weight: normal;
    overflow: hidden;
    white-space: nowrap;
    border-right: 1px solid #d0d0d2;
    border-bottom: 1px solid #d0d0d2;
}

.grid th {
    background: #e6e5e7;
    border-color: #bdbcbe;
}

.grid thead th {
    border-bottom-color: #9c9c9c;
}

.grid th:first-child {
    width: 35px;
    border-right-color: #9c9c9c;
}

.grid th:last-child,
.grid td:last-child {
    width: auto;
    border-right: 0;
}

.grid thead th:first-child {
    background: linear-gradient(135deg, transparent 50%, #b5b3b5 50%) 15px 4px / 16px 16px no-repeat #e6e5e7;
}

.grid .head-on {
    background: #d2d1d3;
    color: #217346;
}

.grid thead .head-on {
    border-bottom: 2px solid #217346;
}

.grid .picked {
    background: #c7c5c7;
    border-color: #a3a2a4;
}

.grid .num {
    text-align: right;
}

.selection {
    position: absolute;
    left: 34px;
    top: 46px;
    width: 402px;
    height: 75px;
    border: 2px solid #217346;
}

.selection::after {
    content: "";
    position: absolute;
    right: -3px;
    bottom: -3px;
    width: 6px;
    height: 6px;
    background: #217346;
    border: 1px solid #fff;
    border-width: 1px 0 0 1px;
}

.quick-analysis {
    position: absolute;
    left: 438px;
    top: 123px;
    width: 28px;
    height: 28px;
    display: flex;
    align-items: center;
    justify-content: center;
    background: #fff;
    border: 1px solid #217346;
}

.tooltip {
    position: absolute;
    left: 438px;
    top: 153px;
    width: 260px;
    padding: 7px 11px 9px;
    background: #fff;
    border: 1px solid #bebebe;
    box-shadow: 2px 2px 4px rgba(0, 0, 0, 0.15);
    line-height: 20px;
    color: #666;
    white-space: nowrap;
}

.tooltip h2 {
    margin: 0 0 6px;
    font-size: 14px;
    line-height: 20px;
    color: #555;
}

.tooltip p {
    margin: 0;
}

.vscroll {
    width: 19px;
    display: flex;
    flex-direction: column;
    padding-top: 2px;
    background: #dcdbdd;
}

.vscroll button,
.hscroll button {
    width: 19px;
    height: 19px;
    display: flex;
    align-items: center;
    justify-content: center;
    background: #fff;
    border: 1px solid #c3c1c3;
}

.vscroll .caret {
    border-width: 5px;
    border-bottom-width: 0;
}

.vscroll .caret.up {
    border-width: 0 5px 5px;
}

.vscroll .thumb {
    flex: 1;
    margin-bottom: 24px;
    background: #fff;
    border: 1px solid #b5b3b5;
}

/* sheet tabs */
.sheet-tabs {
    display: flex;
    align-items: center;
    height: 30px;
    padding-right: 24px;
    border-top: 1px solid #9c9c9c;
    border-bottom: 1px solid #bdbcbe;
}

.sheet-nav {
    width: 103px;
    display: flex;
    gap: 23px;
    padding-left: 28px;
}

.sheet-nav .side {
    display: block;
}

.sheet-nav .left {
    border-right-color: #bdbcbe;
}

.sheet-nav .right {
    border-left-color: #bdbcbe;
}

.sheet-tab {
    align-self: flex-start;
    height: 26px;
    margin-top: -1px;
    padding: 0 12px;
    background: #fff;
    border: 1px solid #9c9c9c;
    border-width: 0 1px 2px;
    border-bottom-color: #217346;
    color: #217346;
    font-size: 17px;
    font-weight: bold;
    line-height: 22px;
}

.add {
    margin-left: 33px;
}

.sheet-tabs .dots {
    margin-left: auto;
    margin-right: 15px;
}

.hscroll {
    width: 728px;
    display: flex;
    background: #dcdbdd;
}

.hscroll .thumb {
    flex: 1;
    height: 19px;
    margin-right: 30px;
    background: #fff;
    border: 1px solid #b5b3b5;
}

/* status bar */
.status {
    display: flex;
    align-items: center;
    height: 25px;
    background: #f1f0f2;
    font-size: 12px;
    color: #555;
}

.status > span {
    margin-right: 16px;
}

.status .ready {
    margin-left: 7px;
    margin-right: auto;
}

.views {
    display: flex;
    align-self: stretch;
    margin-left: 3px;
}

.views button {
    width: 41px;
    display: flex;
    align-items: center;
    justify-content: center;
}

.views .on {
    width: 50px;
    background: #c6c4c6;
}

.zoom {
    display: flex;
    align-items: center;
    gap: 4px;
    margin-right: 9px;
}

.zoom input {
    appearance: none;
    width: 130px;
    height: 14px;
    margin: 0;
    background: linear-gradient(#999, #999) center / 100% 1px no-repeat;
}

.zoom input::-webkit-slider-thumb {
    appearance: none;
    width: 5px;
    height: 13px;
    background: #666;
}

.zoom span {
    margin-left: 14px;
}

/* taskbar */
.taskbar {
    display: flex;
    height: 39px;
    border-top: 2px solid #1d559c;
    background: linear-gradient(90deg, #4f4a6c, #4c4970 50%, #3b375c 85%);
    color: #fff;
}

.taskbar button {
    display: flex;
    align-items: center;
    justify-content: center;
}

.system {
    display: flex;
    width: 138px;
}

.system button {
    width: 45px;
}

.apps {
    display: flex;
}

.apps button {
    width: 46px;
}

.apps .run {
    background: linear-gradient(#b0a8ec, #b0a8ec) 6px bottom / 35px 3px no-repeat;
}

.apps .run.more {
    background: linear-gradient(90deg, #b0a8ec 24px, #8882b8 24px) 6px bottom / 35px 3px no-repeat;
}

.apps .run.current {
    background: linear-gradient(#b0a8ec, #b0a8ec) left bottom / 100% 3px no-repeat, #5c55a0;
}

.tray {
    display: flex;
    align-items: center;
    gap: 11px;
    margin-left: auto;
}

.tray .people {
    margin-right: 10px;
}

.tray time {
    font-size: 14px;
    margin-left: 4px;
}

.tray .notice {
    margin-left: 12px;
    margin-right: 25px;
}

.desktop {
    width: 6px;
    border-left: 1px solid #777496;
}

.pointer {
    position: absolute;
    left: 784px;
    bottom: 4px;
}

/* recorder watermark */
.watermark {
    position: absolute;
    right: 8px;
    bottom: 5px;
    display: flex;
    width: 295px;
    pointer-events: none;
}

.brand {
    flex: 1;
    display: flex;
    flex-direction: column;
    align-items: flex-end;
    font-family: "Liberation Serif", serif;
    font-style: italic;
    color: rgba(255, 255, 255, 0.85);
}

.brand span {
    font-size: 60px;
    line-height: 66px;
    text-shadow: 1px 1px 0 rgba(80, 80, 80, 0.6);
}

.brand small {
    font-family: Lato, sans-serif;
    font-size: 28px;
    font-weight: 300;
    line-height: 20px;
    color: rgba(255, 255, 255, 0.45);
}
```

FILE: script.js
```js
const columns = 'ABCDEFGHIJKLMNOPQRSTUVW'.split('');
const rowCount = 30;
const data = {
    1: ['Id', 'Name', 'Date', 'Time'],
    2: ['100', "['Abhishek", '2/3/2019', '9:05:38'],
    3: ['101', "['Dhairya']", '2/3/2019', '9:06:06']
};

// column letters, A to E are selected
let head = '<tr><th></th>';
columns.forEach((letter, c) => {
    head += `<th class="${c < 5 ? 'head-on' : ''}">${letter}</th>`;
});
document.querySelector('.grid thead').innerHTML = head + '<th></th></tr>';

// rows, A2:E4 is selected and E4 is the active cell
// one empty row is added under the last number
let body = '';
for (let r = 1; r <= rowCount + 1; r++) {
    const rowOn = r >= 2 && r <= 4;
    body += `<tr><th class="${rowOn ? 'head-on' : ''}">${r <= rowCount ? r : ''}</th>`;
    for (let c = 0; c <= columns.length; c++) {
        const text = data[r] && data[r][c] ? data[r][c] : '';
        let cls = rowOn && c < 5 && !(r === 4 && c === 4) ? 'picked' : '';
        if (r > 1 && c !== 1 && text) {
            cls += ' num';
        }
        body += `<td class="${cls}">${text}</td>`;
    }
    body += '</tr>';
}
document.querySelector('.grid tbody').innerHTML = body;
```
